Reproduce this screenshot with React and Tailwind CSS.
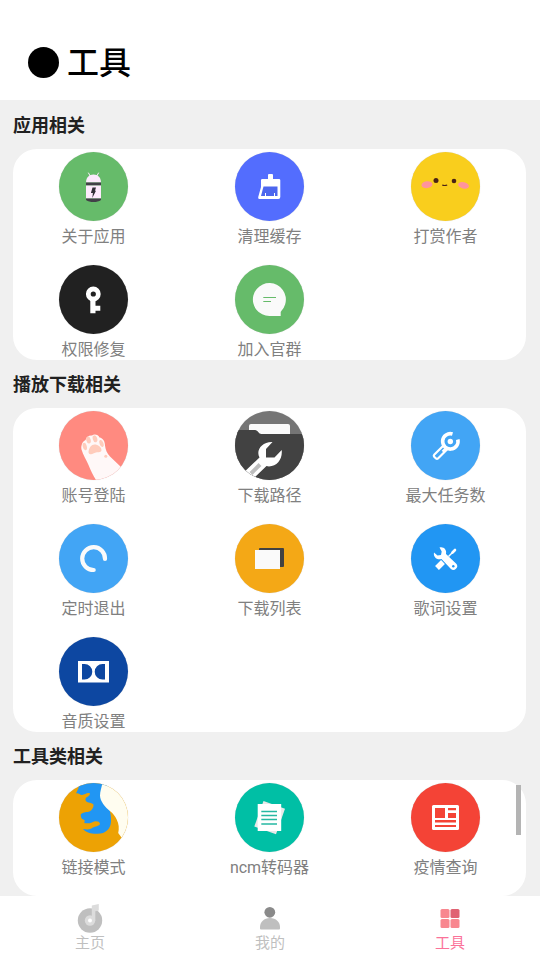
import React, { useState } from "react";

const sections = [
  {
    title: "应用相关",
    items: [
      {
        label: "关于应用",
        bg: "bg-[#66bb6a]",
        icon: (
          <>
            <path d="M29.5 21l2 3.5M39.5 21l-2 3.5" stroke="#fdeafd" strokeWidth="1" strokeLinecap="round" />
            <path d="M27 30.5c0-5 3-8 7.5-8s7.5 3 7.5 8z" fill="#fdeafd" />
            <path d="M27 30.5h15v3H27z" fill="#424048" />
            <path d="M27 33.5h15v13H27z" fill="#fdeafd" />
            <path d="M27 46.5h15V48c-2 1.5-4.500 2-7.500 2s-5.500-.5-7.500-2z" fill="#424048" />
            <path d="M33.500 35.500H37l-1 3.200h1l-3.700 7.300.6-5h-2z" fill="#322f38" />
          </>
        ),
      },
      {
        label: "清理缓存",
        bg: "bg-[#536dfe]",
        icon: (
          <>
            <path
              d="M33 23a1 1 0 0 1 1-1h3a1 1 0 0 1 1 1v4h6a1.300 1.300 0 0 1 1.300 1.300V45a2 2 0 0 1-2 2H25a1.800 1.800 0 0 1-1.700-2.300L26 35v-6.700A1.300 1.300 0 0 1 27.300 27H33z"
              fill="#fff"
            />
            <path d="M28.500 34.500h14V44h-16.500z" fill="#4c66ee" />
            <path d="M30.500 41v3M39.500 41v3" stroke="#fff" strokeWidth="1" />
          </>
        ),
      },
      {
        label: "打赏作者",
        bg: "bg-[#f9ce1d]",
        icon: (
          <>
            <circle cx="25" cy="28.5" r="2.5" fill="#4a2316" />
            <circle cx="43" cy="29" r="2.3" fill="#4a2316" />
            <path d="M31.2 33q2.5 1 5 0" stroke="#4a2316" strokeWidth="1.2" fill="none" />
            <ellipse cx="16" cy="32.7" rx="5.5" ry="3.4" fill="#ff949b" transform="rotate(-8 16 32.7)" />
            <ellipse cx="52.5" cy="33.3" rx="5.5" ry="3.2" fill="#ff949b" transform="rotate(14 52.5 33.3)" />
          </>
        ),
      },
      {
        label: "权限修复",
        bg: "bg-[#212121]",
        icon: (
          <>
            <circle cx="34.3" cy="29" r="5" stroke="#fff" strokeWidth="4.8" fill="none" />
            <path d="M31.3 35h5.2v5.7h4.8v5h-4.8v2.500h-5.200z" fill="#fff" />
          </>
        ),
      },
      {
        label: "加入官群",
        bg: "bg-[#66bb6a]",
        icon: (
          <>
            <path d="M45.700 51H34.500A16.500 16.500 0 1 1 46.500 45.700l-.8 1.300z" fill="#fafafa" />
            <path d="M28.300 32.500H41M28.300 36.500H36" stroke="#66bb6a" strokeWidth="1" />
          </>
        ),
      },
    ],
  },
  {
    title: "播放下载相关",
    items: [
      {
        label: "账号登陆",
        bg: "bg-[#ff8a80]",
        icon: (
          <>
            <path
              d="M37 69c-3-5-5-9-7.500-15-2-5-5.500-10-7-15.500-.8-4 1-8 4-9.500 1-3 3.500-5 6.500-4.500 2.500-2 6.500-.5 7.500 2 3.500.5 5.500 4 5.500 8 .5 4 2 8 5 11L62 56l7 13z"
              fill="#fff8f8"
            />
            <ellipse cx="25.8" cy="35.5" rx="2" ry="3.8" fill="#ffccbc" transform="rotate(-14 25.8 35.5)" />
            <ellipse cx="29.5" cy="29" rx="2.2" ry="3.5" fill="#ffccbc" transform="rotate(-14 29.5 29)" />
            <ellipse cx="36" cy="27.8" rx="2.2" ry="3.6" fill="#ffccbc" transform="rotate(-18 36 27.8)" />
            <ellipse cx="42.5" cy="32.5" rx="1.9" ry="3.6" fill="#ffccbc" transform="rotate(-20 42.5 32.5)" />
            <path d="M29.500 41c.5-4.500 3-7.500 6-7.500 3.500 0 7 2.500 7 5.500 0 2.500-3 2-5.500 2.500s-3.500 2-5.500 1.700c-1.300-.2-2-1-2-2.200z" fill="#ffccbc" />
            <circle cx="46.8" cy="45.3" r="1.5" fill="#ffccbc" />
          </>
        ),
      },
      {
        label: "下载路径",
        bg: "bg-[#757575]",
        icon: (
          <>
            <path d="M14 26V15q0-2 2-2h37q2 0 2 2v11z" fill="#fafafa" />
            <path d="M0 19h20c3 0 3.500 4 6.500 4H69v46H0z" fill="#424242" />
            <path
              d="M37.500 31l-6.500 7v8.500h8.500l7.200-7.500c1 9-4.500 16.500-12.700 16.500l-2.500-.5L16 70 5 65l19.500-18.500c-4-7 2.500-16 13-15.500z"
              fill="#fff"
            />
            <path d="M16 62.500l9-9" stroke="#bdbdbd" strokeWidth="4" />
          </>
        ),
      },
      {
        label: "最大任务数",
        bg: "bg-[#42a5f5]",
        icon: (
          <>
            <path d="M41.500 23a7.700 7.700 0 1 0 5.300 5.500" stroke="#fff" strokeWidth="3.6" fill="none" />
            <circle cx="39.3" cy="30.5" r="2.7" fill="#fff" />
            <path
              d="M32.500 34.500l-9.300 9.200a1.500 1.500 0 0 0 0 2l1.800 1.800a1.500 1.500 0 0 0 2 0l9.500-9.500M31.500 40.500l3-3"
              stroke="#fff"
              strokeWidth="2.2"
              fill="none"
            />
          </>
        ),
      },
      {
        label: "定时退出",
        bg: "bg-[#42a5f5]",
        icon: (
          <path d="M46 35A11.400 11.400 0 1 0 34.700 46" stroke="#fafafa" strokeWidth="4.2" strokeLinecap="round" fill="none" />
        ),
      },
      {
        label: "下载列表",
        bg: "bg-[#f4a816]",
        icon: (
          <>
            <rect x="24" y="24" width="25" height="19" rx="1" fill="#424242" />
            <rect x="20" y="26" width="25" height="19" fill="#fafafa" />
          </>
        ),
      },
      {
        label: "歌词设置",
        bg: "bg-[#2196f3]",
        icon: (
          <>
            <path
              d="M28.500 23.500c4-1.200 7.500 2 6.500 6.500l10 9.500a3.700 3.700 0 0 1-5.300 5.300L30.500 35c-4.500 1.500-8.500-2-7.500-6.500l3.500 3 3.500-.5.700-3.500z"
              fill="#fff"
            />
            <circle cx="42.3" cy="42.3" r="1.2" fill="#2196f3" />
            <path d="M37.500 32.500l6-6" stroke="#fff" strokeWidth="1.5" />
            <path d="M41.500 28.500l2.500-2.500" stroke="#fff" strokeWidth="2.6" strokeLinecap="round" />
            <path d="M32 38l-6 6" stroke="#fff" strokeWidth="5.4" />
          </>
        ),
      },
      {
        label: "音质设置",
        bg: "bg-[#0d47a1]",
        icon: (
          <>
            <path d="M19 24h31v21.500H19z" fill="#fff" />
            <path d="M23 27h2.500a7.800 7.800 0 0 1 0 15.600H23zM46 27h-2.500a7.800 7.800 0 0 0 0 15.600H46z" fill="#0d47a1" />
          </>
        ),
      },
    ],
  },
  {
    title: "工具类相关",
    items: [
      {
        label: "链接模式",
        bg: "bg-[#eda204]",
        icon: (
          <>
            <path
              d="M20 0L19.500 5 17 10.500c2.500-1 3.500 1.500 6 1.500 3 0 5-3 8-1.500-.5 3.500-4 3-4.500 5.500-.3 2 1 3 3 3.500 2 .5 4 .5 5 2 .3 3-1.500 5.500-4 7-2.500 1-6 0-8.800 3 0 2 .5 3.500 1.500 4.500 1.500.5 2.500 1 2.500 2l-.5 2c5 1 8-.5 10-1.500 3-.5 5.500 0 5.800 2.500-1.500 3-6 2-8.500 4.500-3 1.500-6 1-8.500.5 3 3.500 8 4.800 13 4.800C46 51.500 52 46 52 38c0-3 0-6-1-9l-2-14V0z"
              fill="#2196f3"
            />
            <path
              d="M43.500 0H69v58l-6.500-3.500-3.300-4.500c1-4.500.8-9-1.500-13.500-1.700-3.500-3.700-6-6.200-8C46 24 41 18 41 12.500c0-4 1.500-8 2.500-12.500z"
              fill="#fffdf0"
            />
          </>
        ),
      },
      {
        label: "ncm转码器",
        bg: "bg-[#00bfa5]",
        icon: (
          <>
            <path d="M28.500 18L50 25.700 41 51.300 19.300 43.500z" fill="#e8e8e8" />
            <path d="M22.700 21h23.500v27H22.700z" fill="#fff" />
            <path d="M26.300 28.500H42M26.300 32.500H42M26.300 36.500H42M26.300 41H42" stroke="#26b8a2" strokeWidth="1.5" />
          </>
        ),
      },
      {
        label: "疫情查询",
        bg: "bg-[#f44336]",
        icon: (
          <>
            <rect x="21" y="22" width="27" height="25" rx="1.5" fill="#fff" />
            <path d="M24 25h10v10H24zM37 25h8v2.200h-8zM37 30h8v5h-8zM24 37h21v2.500H24zM24 42h21v2H24z" fill="#f44336" />
          </>
        ),
      },
    ],
  },
];

const tabs = [
  {
    label: "主页",
    icon: (
      <>
        <circle cx="15" cy="17.5" r="12.2" fill="#bfbfbf" />
        <circle cx="15" cy="17.5" r="5.2" fill="#dcdcdc" />
        <path d="M16.800 2.500l7-1.500v6.500l-3.500.8v9.500h-3.500z" fill="#dcdcdc" />
        <circle cx="15" cy="17.5" r="2" fill="#fff" />
      </>
    ),
  },
  {
    label: "我的",
    icon: (
      <>
        <circle cx="14.8" cy="9.3" r="5.4" fill="#8a8a8a" />
        <path d="M5 25.500v-1.500c0-5 4-9 10-9s10 4 10 9v1.500q0 1-1 1H6q-1 0-1-1z" fill="#bfbfbf" />
      </>
    ),
  },
  {
    label: "工具",
    icon: (
      <>
        <rect x="5.5" y="6" width="9" height="9" rx="1.5" fill="#f8878f" />
        <rect x="15.5" y="6" width="9" height="9" rx="1.5" fill="#e06272" />
        <rect x="5.5" y="16" width="9" height="9" rx="1.5" fill="#f8878f" />
        <rect x="15.5" y="16" width="9" height="9" rx="1.5" fill="#f8878f" />
      </>
    ),
  },
];

const ToolButton = ({ item }) => (
  <button className="flex flex-col items-center pt-[3px]">
    <svg
      viewBox="0 0 69 69"
      fill="none"
      aria-hidden="true"
      className={`size-[69px] overflow-hidden rounded-full shadow-[0_0_1px_rgba(0,0,0,0.2)] ${item.bg}`}
    >
      {item.icon}
    </svg>
    <span className="mt-1.5 text-base leading-5 text-[#808080]">{item.label}</span>
  </button>
);

const App = () => {
  const [active, setActive] = useState("工具");

  return (
    <div className="flex min-h-screen flex-col bg-[#f0f0f0] font-['Roboto','Noto_Sans_CJK_SC',sans-serif]">
      <header className="flex h-[100px] items-center gap-2 bg-white pt-6 pl-7">
        <span className="size-[31px] rounded-full bg-black" />
        <h1 className="pt-0.5 text-[32px] leading-10 font-medium text-black">工具</h1>
      </header>

      <main className="flex-1 pt-px pr-3.5 pl-[13px]">
        {sections.map((section, index) => (
          <section key={section.title}>
            <h2 className="pt-0.5 text-lg leading-[46px] font-bold text-[#212121]">{section.title}</h2>
            <div
              className={`relative grid grid-cols-3 gap-[15px] rounded-3xl bg-white ${
                index === sections.length - 1 ? "pb-[18px]" : ""
              }`}
            >
              {section.items.map((item) => (
                <ToolButton key={item.label} item={item} />
              ))}
              {/* Scroll indicator */}
              {index === sections.length - 1 && (
                <span className="absolute top-[5px] right-[5px] h-[50px] w-[5px] bg-[#b4b4b4]" />
              )}
            </div>
          </section>
        ))}
      </main>

      <nav className="grid h-16 grid-cols-3 bg-white">
        {tabs.map((tab) => (
          <button
            key={tab.label}
            onClick={() => setActive(tab.label)}
            className={`flex flex-col items-center pt-[7px] text-[15px] leading-5 ${
              active === tab.label ? "text-[#fb7299]" : "text-[#bfbfbf]"
            }`}
          >
            <svg viewBox="0 0 30 30" fill="none" aria-hidden="true" className="size-[30px]">
              {tab.icon}
            </svg>
            {tab.label}
          </button>
        ))}
      </nav>
    </div>
  );
};

export default App;
